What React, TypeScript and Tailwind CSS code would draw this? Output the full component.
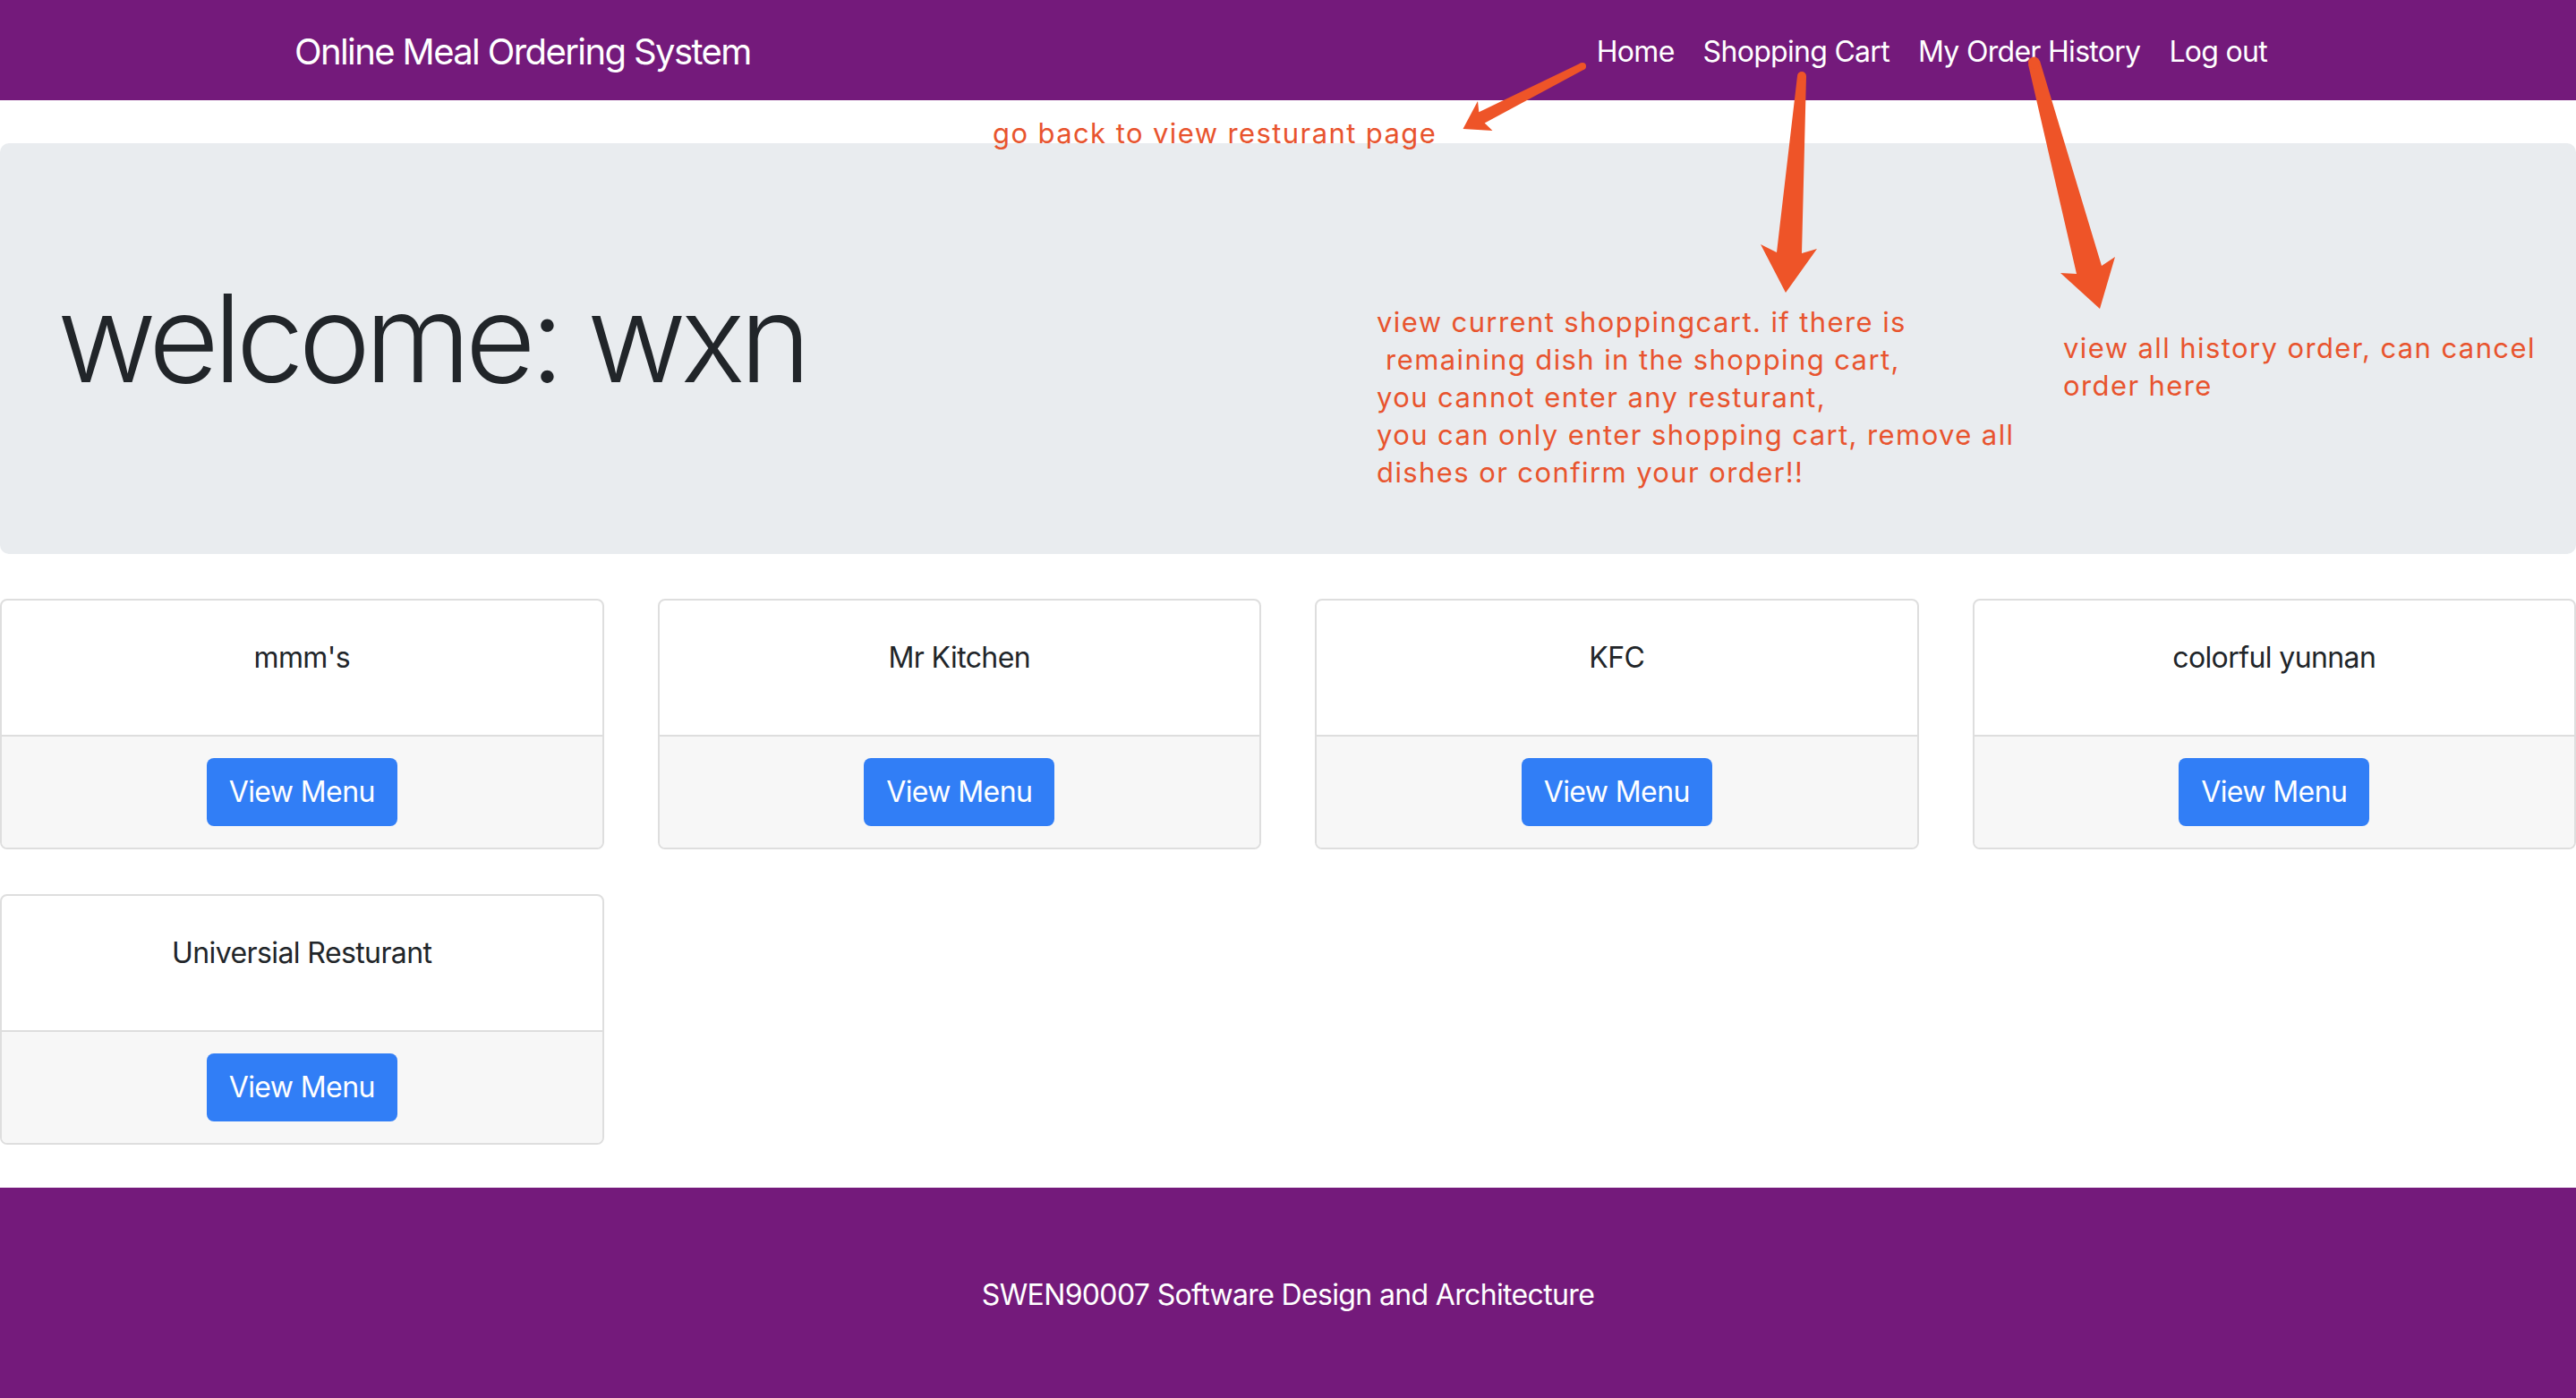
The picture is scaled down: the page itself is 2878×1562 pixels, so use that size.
import * as React from "react";

/**
 * Online Meal Ordering System — home page (restaurant list) with the
 * red review annotations drawn over it.
 *
 * Tokens:
 *   purple   #741a7b  navbar, footer
 *   gray     #e9ecef  welcome panel
 *   blue     #317ef6  "View Menu" button
 *   orange   #ec5430  annotation text + arrows
 */

const restaurants = ["mmm's", "Mr Kitchen", "KFC", "colorful yunnan", "Universial Resturant"];

const navLinks = ["Home", "Shopping Cart", "My Order History", "Log out"];

function RestaurantCard({ name }: { name: string }) {
  return (
    <div className="flex flex-col overflow-hidden rounded-[8px] border-2 border-[#dedede] bg-white">
      <div className="h-[152px] border-b-2 border-[#dedede] px-[40px] pt-[40px] text-center text-[32px] leading-[48px] tracking-[-0.6px] text-[#212529]">
        {name}
      </div>
      <div className="flex justify-center bg-[#f7f7f7] py-[24px]">
        <button className="h-[76px] w-[213px] rounded-[8px] bg-[#317ef6] text-[32px] leading-[48px] tracking-[-0.6px] text-white">
          View Menu
        </button>
      </div>
    </div>
  );
}

function Arrows() {
  return (
    <svg
      className="pointer-events-none absolute left-0 top-0"
      width="2878"
      height="1562"
      viewBox="0 0 2878 1562"
    >
      <g fill="#ee5428">
        {/* Home -> note */}
        <polygon points="1766,70.5 1652.3,125.2 1651,113 1634.5,144 1667.5,146 1658.7,137.6 1770,77.5" />
        <circle cx="1768" cy="74" r="4" />
        {/* Shopping Cart -> note */}
        <polygon points="2008,85 2018,85 2013,283 2030,278 1995,327 1967,273 1985,282" />
        <circle cx="2013" cy="85" r="5" />
        {/* My Order History -> note */}
        <polygon points="2266,72 2279,68 2348,297 2363,287 2346,345 2302,305 2320,306" />
        <circle cx="2272.5" cy="70" r="6.5" />
      </g>
    </svg>
  );
}

function Annotations() {
  return (
    <div className="pointer-events-none absolute left-0 top-0 text-[31px] leading-[42px] tracking-[1.4px] text-[#e8542e]">
      <p className="absolute left-[1109px] top-[128px] whitespace-nowrap">go back to view resturant page</p>
      <div className="absolute left-[1538px] top-[339px] whitespace-pre">
        <p>view current shoppingcart. if there is</p>
        <p> remaining dish in the shopping cart,</p>
        <p>you cannot enter any resturant,</p>
        <p>you can only enter shopping cart, remove all</p>
        <p>dishes or confirm your order!!</p>
      </div>
      <div className="absolute left-[2305px] top-[368px] whitespace-nowrap">
        <p>view all history order, can cancel</p>
        <p>order here</p>
      </div>
    </div>
  );
}

export default function App() {
  return (
    <div
      className="relative w-full overflow-hidden bg-white"
      style={{ fontFamily: "Inter, 'Noto Sans', sans-serif" }}
    >
      {/* Navbar */}
      <nav className="h-[112px] bg-[#741a7b]">
        <div className="mx-auto flex h-full w-[2280px] items-center justify-between px-[30px] pt-[3px]">
          <span className="text-[40px] leading-[60px] tracking-[-1.6px] text-white">Online Meal Ordering System</span>
          <ul className="flex">
            {navLinks.map((l) => (
              <li key={l} className="px-[16px] text-[32px] leading-[48px] tracking-[-0.7px] text-white">
                {l}
              </li>
            ))}
          </ul>
        </div>
      </nav>

      {/* Welcome panel */}
      <div className="mt-[48px] flex h-[459px] items-center rounded-[10px] bg-[#e9ecef] px-[64px] pb-[24px]">
        <h1 className="text-[136px] font-light leading-[1.2] tracking-[-6.4px] text-[#212529]">welcome: wxn</h1>
      </div>

      {/* Restaurant list */}
      <div className="mt-[50px] grid grid-cols-4 gap-x-[60px] gap-y-[50px]">
        {restaurants.map((r) => (
          <RestaurantCard key={r} name={r} />
        ))}
      </div>

      {/* Footer */}
      <footer className="mt-[48px] bg-[#741a7b] py-[96px] text-center text-[32px] leading-[48px] tracking-[-0.65px] text-white">
        SWEN90007 Software Design and Architecture
      </footer>

      <Arrows />
      <Annotations />
    </div>
  );
}
